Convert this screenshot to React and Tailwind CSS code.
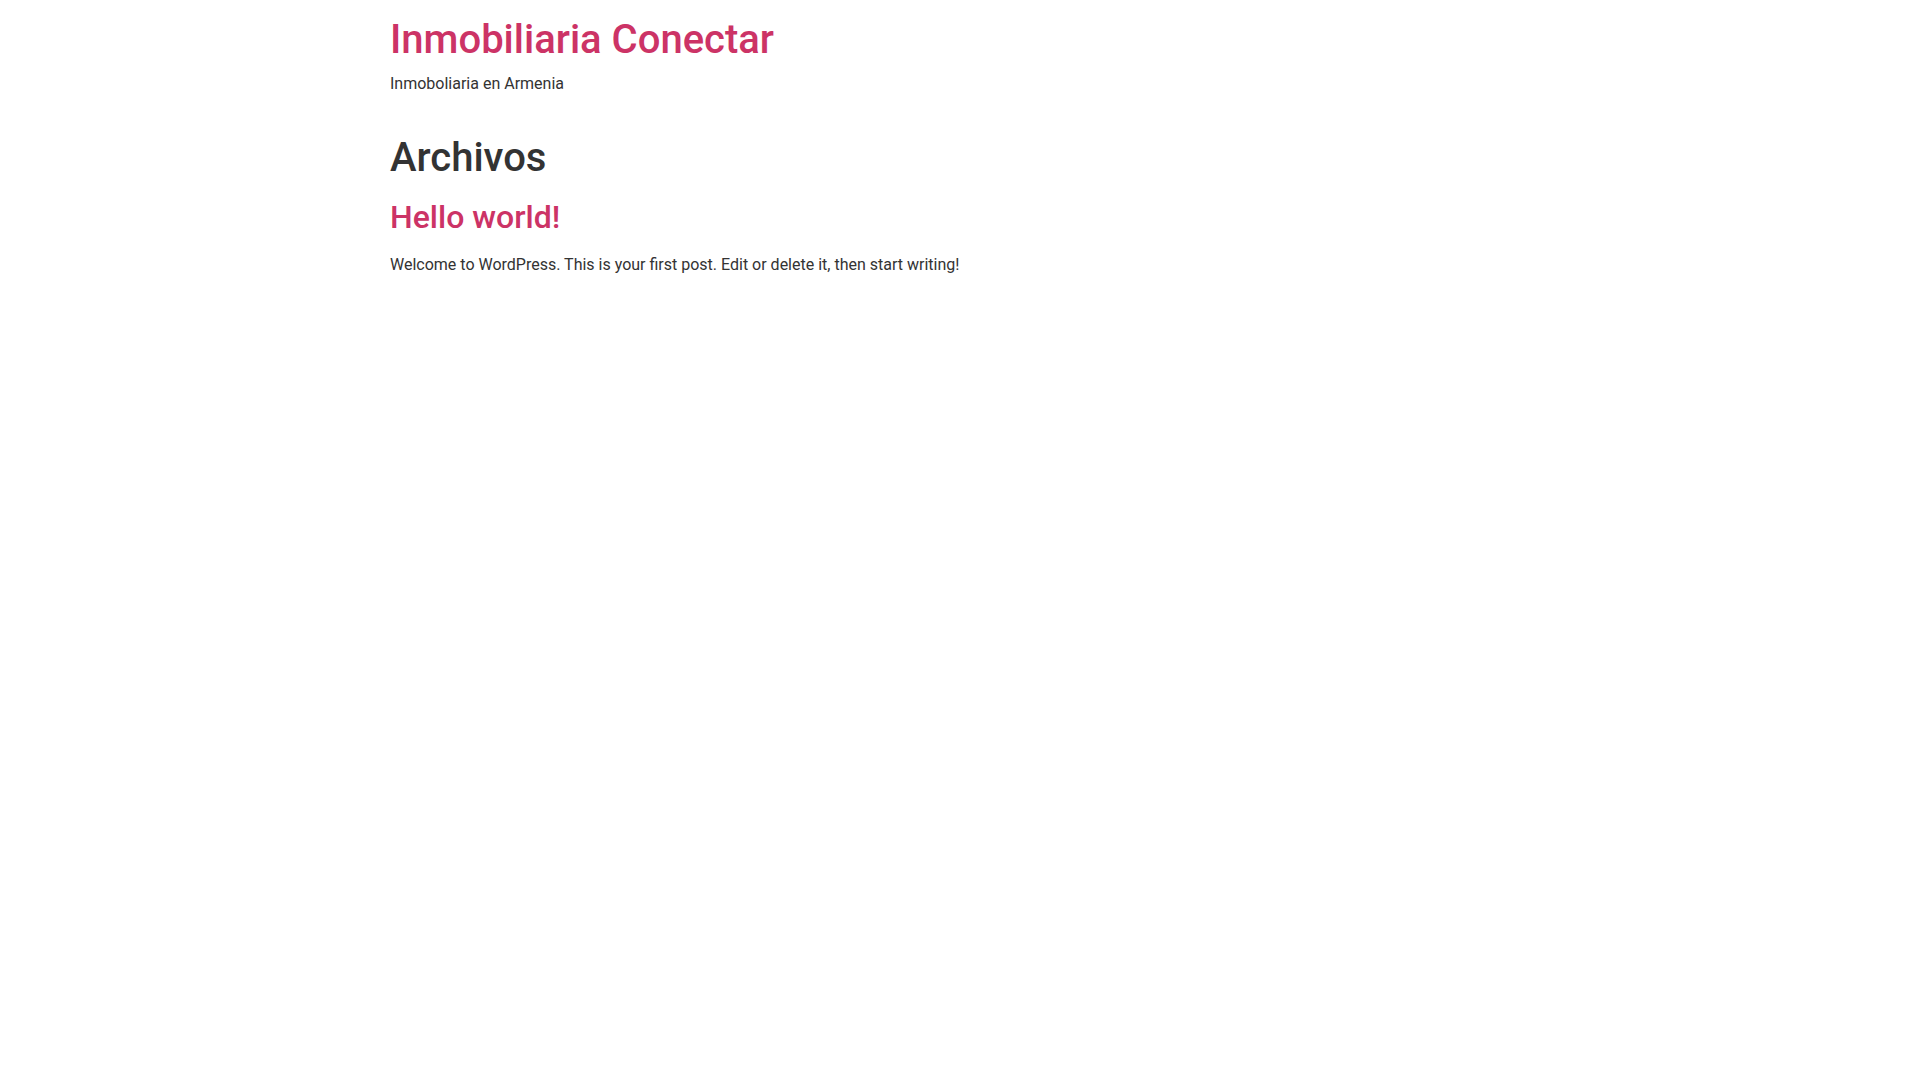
export default function App() {
  return (
    <div className="min-h-screen bg-white text-[#333333] text-base leading-[1.5]" style={{ fontFamily: 'Roboto, "Liberation Sans", sans-serif' }}>
      <header className="mx-auto w-[1140px] pt-4 pb-4">
        <h1 className="m-0 mb-2 text-[40px] font-medium leading-[1.2] text-[#cc3366]">
          <a href="#" className="text-[#cc3366] no-underline">Inmobiliaria Conectar</a>
        </h1>
        <p className="m-0 mb-[14.4px]">Inmoboliaria en Armenia</p>
      </header>
      <main className="mx-auto w-[1140px]">
        <div>
          <h1 className="mt-2 mb-4 text-[40px] font-medium leading-[1.2]">Archivos</h1>
        </div>
        <article>
          <h2 className="mt-4 mb-4 text-[32px] font-medium leading-[1.2] text-[#cc3366]">
            <a href="#" className="text-[#cc3366]">Hello world!</a>
          </h2>
          <p className="m-0 mb-[14.4px]">Welcome to WordPress. This is your first post. Edit or delete it, then start writing!</p>
        </article>
      </main>
    </div>
  );
}
